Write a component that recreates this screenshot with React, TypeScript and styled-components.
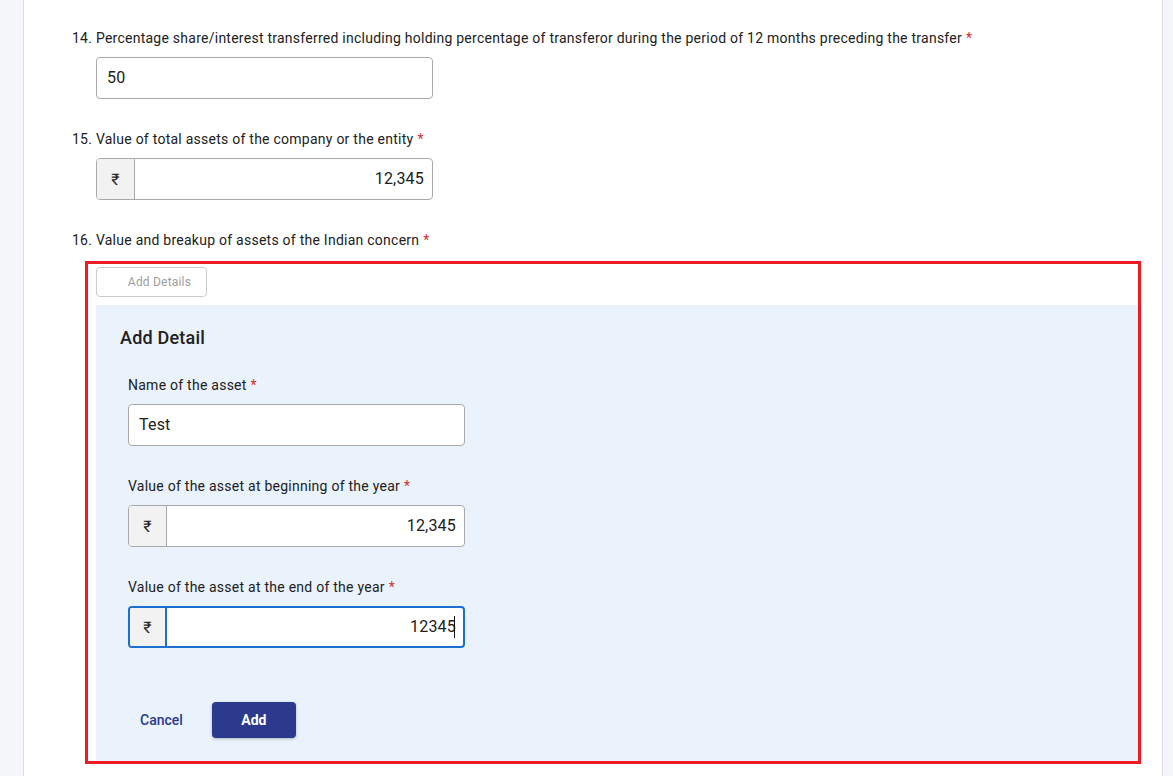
import styled, { createGlobalStyle } from "styled-components";

const GlobalStyle = createGlobalStyle`
  html, body {
    margin: 0;
    padding: 0;
    height: 100%;
    overflow: hidden;
    background: #ffffff;
  }
  body {
    font-family: Roboto, "Liberation Sans", Arial, sans-serif;
    color: #212121;
  }
  * {
    box-sizing: border-box;
  }
`;

const Page = styled.div`
  display: flex;
  width: 1173px;
  height: 776px;
`;

const SideStrip = styled.div<{ $side: "left" | "right" }>`
  flex: 0 0 ${(p) => (p.$side === "left" ? "24px" : "11px")};
  background: #f5f6fa;
  ${(p) =>
    p.$side === "left"
      ? "border-right: 1px solid #dcdde8;"
      : "border-left: 1px solid #dcdde8;"}
`;

const Main = styled.div`
  flex: 1;
  background: #ffffff;
  padding: 28px 0 0 48px;
  display: flex;
  flex-direction: column;
`;

const Question = styled.div`
  display: flex;
  flex-direction: column;
  margin-bottom: 30px;
`;

const Label = styled.label<{ $indent?: number }>`
  font-size: 14px;
  line-height: 20px;
  letter-spacing: 0.25px;
  color: #212121;
  margin-left: ${(p) => p.$indent ?? 0}px;
`;

const Required = styled.span`
  color: #d32f2f;
  margin-left: 4px;
`;

const InputBox = styled.div<{ $focused?: boolean; $indent?: number }>`
  display: flex;
  width: 337px;
  height: 42px;
  margin-top: 9px;
  margin-left: ${(p) => p.$indent ?? 0}px;
  border: ${(p) => (p.$focused ? "2px solid #1a6fd0" : "1px solid #a9a9a9")};
  border-radius: 4px;
  background: #ffffff;
  overflow: hidden;
`;

const Prefix = styled.div<{ $focused?: boolean }>`
  flex: 0 0 ${(p) => (p.$focused ? "37px" : "38px")};
  display: flex;
  align-items: center;
  justify-content: center;
  background: #f2f2f2;
  border-right: ${(p) => (p.$focused ? "2px solid #1a6fd0" : "1px solid #a9a9a9")};
  font-size: 16px;
  color: #212121;
`;

const Value = styled.div<{ $align?: "left" | "right" }>`
  flex: 1;
  display: flex;
  align-items: center;
  justify-content: ${(p) => (p.$align === "right" ? "flex-end" : "flex-start")};
  padding: ${(p) => (p.$align === "right" ? "0 8px 1px 0" : "0 0 1px 10px")};
  font-size: 16px;
  letter-spacing: 0.2px;
  color: #212121;
`;

const Caret = styled.span`
  display: inline-block;
  width: 1px;
  height: 22px;
  background: #111;
  margin-left: -2px;
`;

const Highlight = styled.div`
  width: 1056px;
  margin: 11px 0 0 13px;
  border: 3px solid #ed1c24;
  padding: 3px 0 0 8px;
  display: flex;
  flex-direction: column;
  align-items: flex-start;
`;

const GhostButton = styled.button`
  height: 30px;
  width: 111px;
  padding: 0 13px 0 29px;
  border: 1px solid #cccccc;
  border-radius: 4px;
  background: #ffffff;
  color: #9e9e9e;
  font-family: Roboto, "Liberation Sans", Arial, sans-serif;
  font-size: 12px;
  font-weight: 400;
  letter-spacing: 0.2px;
  margin-bottom: 8px;
`;

const Panel = styled.div`
  align-self: stretch;
  background: #eaf2fb;
  padding: 22px 24px 23px 24px;
  display: flex;
  flex-direction: column;
`;

const PanelTitle = styled.h2`
  margin: 0;
  font-size: 18px;
  line-height: 22px;
  font-weight: 500;
  letter-spacing: 0.2px;
  color: #212121;
`;

const Form = styled.div`
  display: flex;
  flex-direction: column;
  padding: 26px 0 0 8px;
`;

const Field = styled.div`
  display: flex;
  flex-direction: column;
  margin-bottom: 30px;
`;

const Actions = styled.div`
  display: flex;
  align-items: center;
  gap: 17px;
  margin-top: 24px;
  padding-left: 8px;
`;

const TextButton = styled.button`
  height: 36px;
  padding: 0 12px;
  border: none;
  background: transparent;
  color: #2b3a8c;
  font-family: Roboto, "Liberation Sans", Arial, sans-serif;
  font-size: 14px;
  font-weight: 500;
`;

const PrimaryButton = styled.button`
  height: 36px;
  width: 84px;
  border: none;
  border-radius: 4px;
  background: #2b3a8c;
  color: #ffffff;
  font-family: Roboto, "Liberation Sans", Arial, sans-serif;
  font-size: 14px;
  font-weight: 700;
  box-shadow: 0 1px 3px rgba(0, 0, 0, 0.25);
`;

function MoneyInput({
  value,
  focused,
  indent,
}: {
  value: string;
  focused?: boolean;
  indent?: number;
}) {
  return (
    <InputBox $focused={focused} $indent={indent}>
      <Prefix $focused={focused}>₹</Prefix>
      <Value $align="right">
        {value}
        {focused && <Caret />}
      </Value>
    </InputBox>
  );
}

export default function App() {
  return (
    <>
      <GlobalStyle />
      <Page>
        <SideStrip $side="left" />
        <Main>
          <Question>
            <Label>
              14. Percentage share/interest transferred including holding percentage of
              transferor during the period of 12 months preceding the transfer
              <Required>*</Required>
            </Label>
            <InputBox $indent={24}>
              <Value>50</Value>
            </InputBox>
          </Question>

          <Question>
            <Label>
              15. Value of total assets of the company or the entity
              <Required>*</Required>
            </Label>
            <MoneyInput value="12,345" indent={24} />
          </Question>

          <Label>
            16. Value and breakup of assets of the Indian concern
            <Required>*</Required>
          </Label>
          <Highlight>
            <GhostButton>Add Details</GhostButton>
            <Panel>
              <PanelTitle>Add Detail</PanelTitle>
              <Form>
                <Field>
                  <Label>
                    Name of the asset<Required>*</Required>
                  </Label>
                  <InputBox>
                    <Value>Test</Value>
                  </InputBox>
                </Field>
                <Field>
                  <Label>
                    Value of the asset at beginning of the year<Required>*</Required>
                  </Label>
                  <MoneyInput value="12,345" />
                </Field>
                <Field>
                  <Label>
                    Value of the asset at the end of the year<Required>*</Required>
                  </Label>
                  <MoneyInput value="12345" focused />
                </Field>
              </Form>
              <Actions>
                <TextButton>Cancel</TextButton>
                <PrimaryButton>Add</PrimaryButton>
              </Actions>
            </Panel>
          </Highlight>
        </Main>
        <SideStrip $side="right" />
      </Page>
    </>
  );
}
